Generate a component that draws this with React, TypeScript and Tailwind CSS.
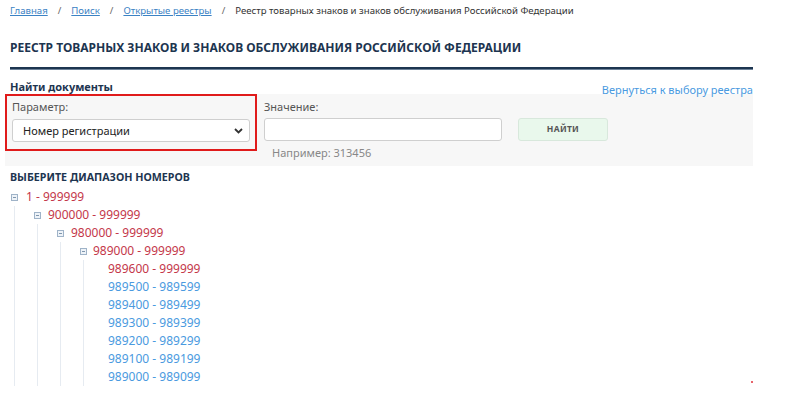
import React from "react";

const TreeIcon = () => (
  <span className="inline-flex items-center justify-center w-[7px] h-[7px] border border-[#9fb3c8] bg-[#eef3f8] shrink-0">
    <span className="block w-[3px] h-px bg-[#7f96ad]" />
  </span>
);

const leaves: { t: string; red?: boolean }[] = [
  { t: "989600 - 999999", red: true },
  { t: "989500 - 989599" },
  { t: "989400 - 989499" },
  { t: "989300 - 989399" },
  { t: "989200 - 989299" },
  { t: "989100 - 989199" },
  { t: "989000 - 989099" },
];

export default function App() {
  return (
    <div className="relative w-[790px] h-[396px] bg-white overflow-hidden text-[#333] font-['Noto_Sans',sans-serif]">
      <div className="w-[753px]">
        {/* breadcrumb */}
        <div className="h-[21px] pl-[10px] flex items-center text-[9.6px] leading-none">
          <a className="text-[#3b82c4] underline">Главная</a>
          <span className="mx-[10px] text-[#666]">/</span>
          <a className="text-[#3b82c4] underline">Поиск</a>
          <span className="mx-[10px] text-[#666]">/</span>
          <a className="text-[#3b82c4] underline">Открытые реестры</a>
          <span className="mx-[10px] text-[#666]">/</span>
          <span className="text-[#333]">Реестр товарных знаков и знаков обслуживания Российской Федерации</span>
        </div>
        {/* title */}
        <div className="h-[46px] pl-[10px] flex items-center pt-[8px] text-[12px] font-bold text-[#1d3550] leading-none">
          РЕЕСТР ТОВАРНЫХ ЗНАКОВ И ЗНАКОВ ОБСЛУЖИВАНИЯ РОССИЙСКОЙ ФЕДЕРАЦИИ
        </div>
        <div className="ml-[10px] h-[3px] bg-[#1d3550] border-b border-[#6d8299]" />
        {/* find docs */}
        <div className="h-[24px] pl-[10px] flex items-end justify-between">
          <span className="text-[11px] font-bold text-[#1d3550] leading-none pb-[2px]">Найти документы</span>
          <span className="text-[11px] text-[#4a9ae0] leading-none whitespace-nowrap -mb-[1px]">Вернуться к выбору реестра</span>
        </div>
        {/* panel */}
        <div className="ml-[5px] h-[72px] bg-[#f7f7f7] flex">
          <div className="w-[252px] h-[57px] border-2 border-[#e01b1b] pl-[5px] pr-[5px] pt-[3px]">
            <div className="text-[11px] text-[#555] leading-none h-[14px] flex items-center">Параметр:</div>
            <div className="mt-[6px] h-[23px] bg-white border border-[#cfcfcf] rounded-[3px] flex items-center justify-between pl-[10px] pr-[6px]">
              <span className="text-[11px] text-[#222] leading-none">Номер регистрации</span>
              <svg width="9" height="6" viewBox="0 0 9 6">
                <path d="M1 1 L4.5 4.5 L8 1" fill="none" stroke="#333" strokeWidth="1.8" />
              </svg>
            </div>
          </div>
          <div className="ml-[7px] pt-[5px] flex flex-col">
            <div className="text-[11px] text-[#555] leading-none h-[14px] flex items-center">Значение:</div>
            <div className="mt-[5px] flex items-center">
              <div className="w-[238px] h-[23px] bg-white border border-[#cfcfcf] rounded-[3px]" />
              <div className="ml-[16px] w-[90px] h-[23px] bg-[#e9f8ec] border border-[#d8e8dc] rounded-[3px] flex items-center justify-center text-[8.5px] font-bold text-[#555] tracking-[0.3px]">
                НАЙТИ
              </div>
            </div>
            <div className="mt-[6px] pl-[8px] text-[11px] text-[#888] leading-none">Например: 313456</div>
          </div>
        </div>
        {/* tree */}
        <div className="pl-[10px] pt-[4px]">
          <div className="h-[14px] text-[10.7px] font-bold text-[#1d3550] leading-none flex items-center">
            ВЫБЕРИТЕ ДИАПАЗОН НОМЕРОВ
          </div>
          <div className="mt-[4px] text-[12px] leading-none">
            <div className="h-[18px] flex items-center pl-[1px]">
              <TreeIcon />
              <span className="ml-[8px] text-[#c4374a]">1 - 999999</span>
            </div>
            <div className="ml-[4px] border-l border-[#e6ebf1] pl-[19px]">
              <div className="h-[18px] flex items-center">
                <TreeIcon />
                <span className="ml-[7px] text-[#c4374a]">900000 - 999999</span>
              </div>
              <div className="ml-[3px] border-l border-[#e6ebf1] pl-[19px]">
                <div className="h-[18px] flex items-center">
                  <TreeIcon />
                  <span className="ml-[7px] text-[#c4374a]">980000 - 999999</span>
                </div>
                <div className="ml-[3px] border-l border-[#e6ebf1] pl-[19px]">
                  <div className="h-[18px] flex items-center">
                    <TreeIcon />
                    <span className="ml-[6px] text-[#c4374a]">989000 - 999999</span>
                  </div>
                  <div className="ml-[3px] border-l border-[#e6ebf1] pl-[24px]">
                    {leaves.map((l) => (
                      <div key={l.t} className="h-[18px] flex items-center">
                        <span className={l.red ? "text-[#c4374a]" : "text-[#4a9ae0]"}>{l.t}</span>
                      </div>
                    ))}
                  </div>
                </div>
              </div>
            </div>
          </div>
        </div>
      </div>
      <span className="absolute left-[751px] top-[381px] w-[2px] h-[2px] bg-[#e0303a] rounded-full" />
    </div>
  );
}
